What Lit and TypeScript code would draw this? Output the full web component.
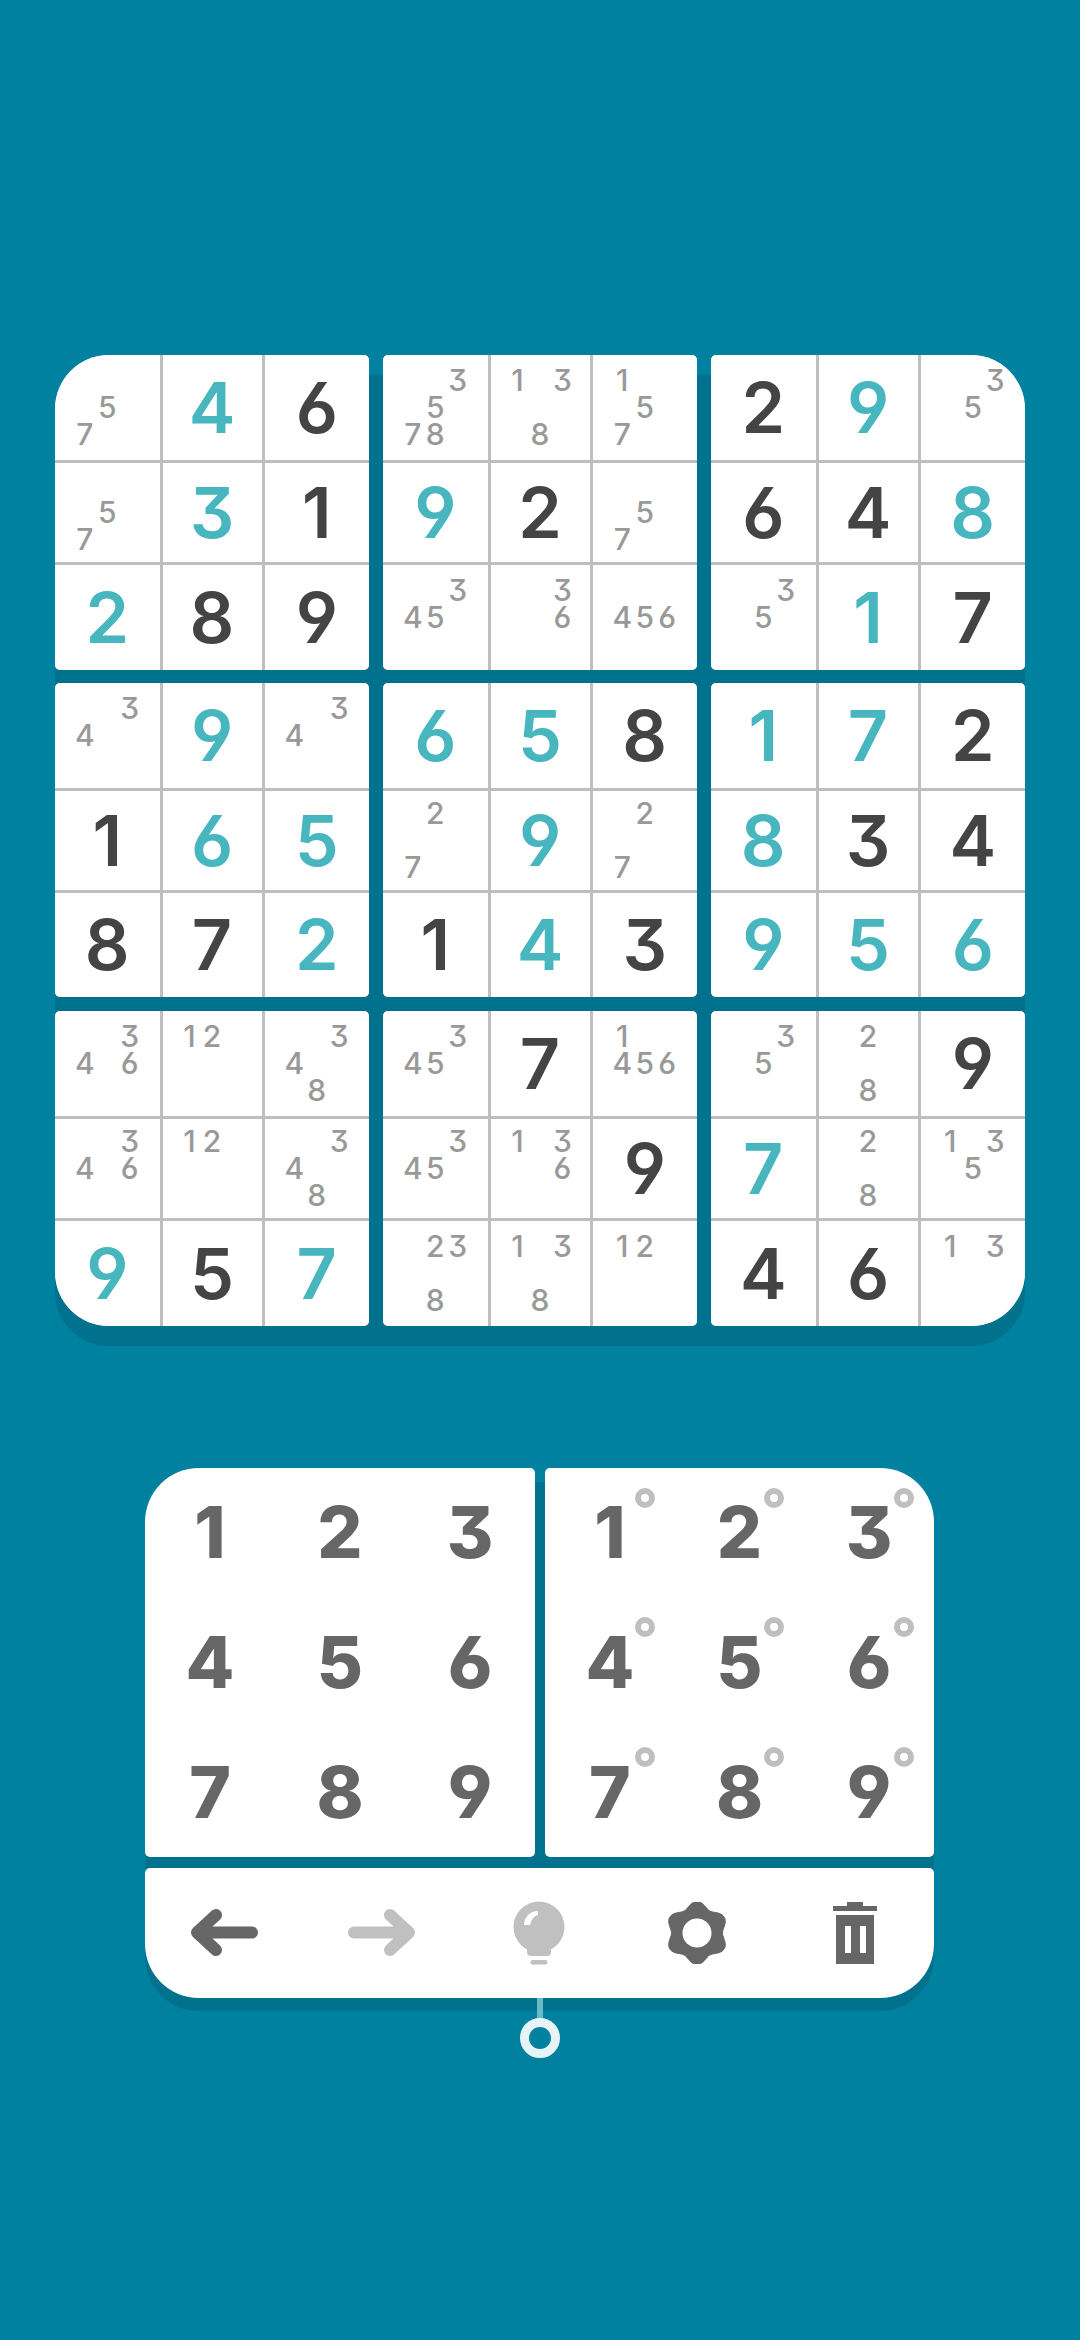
import { LitElement, html, css, svg } from 'lit';
import { customElement } from 'lit/decorators.js';

// one string per block, cells split by space: t = teal digit, d = dark digit, else pencil marks
const BOARD = [
  '57 t4 d6 57 t3 d1 t2 d8 d9',
  '3578 138 157 t9 d2 57 345 36 456',
  'd2 t9 35 d6 d4 t8 35 t1 d7',
  '34 t9 34 d1 t6 t5 d8 d7 t2',
  't6 t5 d8 27 t9 27 d1 t4 d3',
  't1 t7 d2 t8 d3 d4 t9 t5 t6',
  '346 12 348 346 12 348 t9 d5 t7',
  '345 d7 1456 345 136 d9 238 138 12',
  '35 28 d9 t7 28 135 d4 d6 13',
];

const DIGITS = [1, 2, 3, 4, 5, 6, 7, 8, 9];

const gearPath = () => {
  const pts = [];
  for (let i = 0; i < 120; i++) {
    const a = (i / 120) * Math.PI * 2;
    const r = 28.5 + 3 * Math.cos(6 * a);
    pts.push(`${(31 + r * Math.sin(a)).toFixed(2)} ${(31 - r * Math.cos(a)).toFixed(2)}`);
  }
  return 'M' + pts.join('L') + 'Z';
};

@customElement('app-root')
export class AppRoot extends LitElement {
  static styles = css`
:host {
  display: block;
  min-height: 2340px;
  box-sizing: border-box;
  padding: 355px 55px 0;
  background: #00819f;
  font-family: Inter, "Liberation Sans", sans-serif;
  font-feature-settings: "cv03", "cv04", "cv09";
}

.board {
  position: relative;
  display: grid;
  grid-template-columns: repeat(3, 314px);
  grid-template-rows: repeat(3, 315px);
  gap: 13px 14px;
  width: 970px;
}

.board::before, .pad::before {
  content: "";
  position: absolute;
  inset: 20px 0 -20px 0;
  background: #00728e;
  border-radius: 54px;
}

.block {
  position: relative;
  display: grid;
  grid-template-columns: 104.5px 99px 104.5px;
  grid-template-rows: 105px 99px 105px;
  gap: 3px;
  background: #bebebe;
  border-radius: 5px;
  overflow: hidden;
}

.block.mid {
  grid-template-rows: 105px 99px 104px;
  height: 314px;
}

.block.tl { border-top-left-radius: 54px; }
.block.tr { border-top-right-radius: 54px; }
.block.bl { border-bottom-left-radius: 54px; }
.block.br { border-bottom-right-radius: 54px; }

.cell {
  display: flex;
  align-items: center;
  justify-content: center;
  background: #fff;
}

.big {
  font-size: 70px;
  line-height: 1;
  font-weight: 600;
}

.big.d { color: #444; }
.big.t { color: #47b6be; }

.notes {
  display: grid;
  grid-template-columns: repeat(3, 22.5px);
  grid-auto-rows: 27px;
  font-size: 30px;
  line-height: 27px;
  font-weight: 500;
  color: #999;
  text-align: center;
}

.pad {
  position: relative;
  display: grid;
  grid-template-columns: 390px 389px;
  gap: 10px;
  width: 789px;
  margin: 142px 0 0 90px;
}

.pad::before {
  inset: 14px 0 -13px 0;
}

.keys {
  position: relative;
  display: grid;
  grid-template-columns: repeat(3, 1fr);
  grid-template-rows: repeat(3, 1fr);
  height: 389px;
  background: #fff;
  border-radius: 5px;
}

.keys.left { border-top-left-radius: 54px; }
.keys.right { border-top-right-radius: 54px; }

.key {
  position: relative;
  display: flex;
  align-items: center;
  justify-content: center;
  font-size: 71px;
  line-height: 1;
  font-weight: 800;
  color: #666;
}

.dot {
  position: absolute;
  left: 50%;
  top: 50%;
  width: 20px;
  height: 20px;
  margin: -45px 0 0 25px;
  box-sizing: border-box;
  border: 6px solid #bfbfbf;
  border-radius: 50%;
}

.tools {
  position: relative;
  grid-column: 1 / -1;
  display: grid;
  grid-template-columns: repeat(5, 1fr);
  height: 130px;
  margin-top: 1px;
  background: #fff;
  border-radius: 5px 5px 54px 54px;
}

.tool {
  display: flex;
  align-items: center;
  justify-content: center;
}

.touch {
  position: absolute;
  left: 375px;
  top: 100%;
  display: flex;
  flex-direction: column;
  align-items: center;
  width: 40px;
}

.touch .stem {
  width: 6px;
  height: 20px;
  background: #6db9cc;
}

.touch .ring {
  width: 40px;
  height: 40px;
  box-sizing: border-box;
  border: 9px solid #e6f4f7;
  border-radius: 50%;
}
  `;

  private cell(value: string) {
    if (value[0] === 't' || value[0] === 'd') {
      return html`<div class="cell"><span class="big ${value[0]}">${value.slice(1)}</span></div>`;
    }
    return html`<div class="cell"><div class="notes">
      ${DIGITS.map((d) => html`<span>${value.includes(String(d)) ? d : ''}</span>`)}
    </div></div>`;
  }

  private block(cells: string, i: number) {
    const corner = ({ 0: 'tl', 2: 'tr', 6: 'bl', 8: 'br' } as Record<number, string>)[i] ?? '';
    const mid = i >= 3 && i <= 5 ? 'mid' : '';
    return html`<div class="block ${corner} ${mid}">${cells.split(' ').map((c) => this.cell(c))}</div>`;
  }

  render() {
    return html`
      <div class="board">${BOARD.map((b, i) => this.block(b, i))}</div>
      <div class="pad">
        <div class="keys left">
          ${DIGITS.map((d) => html`<div class="key">${d}</div>`)}
        </div>
        <div class="keys right">
          ${DIGITS.map((d) => html`<div class="key">${d}<i class="dot"></i></div>`)}
        </div>
        <div class="tools">
          <div class="tool">
            <svg width="68" height="48" viewBox="0 0 68 48" fill="none" stroke="#666" stroke-width="12" stroke-linecap="round" stroke-linejoin="round">
              <path d="M62 23.500H8M26 6L7 23.500L26 41"></path>
            </svg>
          </div>
          <div class="tool">
            <svg width="68" height="48" viewBox="0 0 68 48" fill="none" stroke="#c0c0c0" stroke-width="12" stroke-linecap="round" stroke-linejoin="round">
              <path d="M6 23.500H60M42 6L61 23.500L42 41"></path>
            </svg>
          </div>
          <div class="tool">
            <svg width="52" height="64" viewBox="0 0 52 64">
              <circle cx="26" cy="26" r="25.500" fill="#c0c0c0"></circle>
              <path d="M14 44H38V51Q38 55 34 55H18Q14 55 14 51Z" fill="#c0c0c0"></path>
              <rect x="17.500" y="59" width="17" height="4.500" rx="2" fill="#c0c0c0"></rect>
              <path d="M11 24A14 14 0 0 1 25 10V14Q19 15 17 24Z" fill="#fff"></path>
            </svg>
          </div>
          <div class="tool">
            <svg width="62" height="62" viewBox="0 0 62 62">
              ${svg`<path d=${gearPath()} fill="#666" stroke="#666" stroke-width="1" stroke-linejoin="round"></path>`}
              <circle cx="31" cy="31" r="14.500" fill="#fff"></circle>
            </svg>
          </div>
          <div class="tool">
            <svg width="44" height="62" viewBox="0 0 44 62" fill="#666">
              <path d="M14 0H30V4H44V9H0V4H14Z"></path>
              <path fill-rule="evenodd" d="M3 13H41V62H3ZM12 24V51H18V24ZM27 24V51H33V24Z"></path>
            </svg>
          </div>
          <div class="touch">
            <div class="stem"></div>
            <div class="ring"></div>
          </div>
        </div>
      </div>
    `;
  }
}

declare global {
  interface HTMLElementTagNameMap {
    'app-root': AppRoot;
  }
}
